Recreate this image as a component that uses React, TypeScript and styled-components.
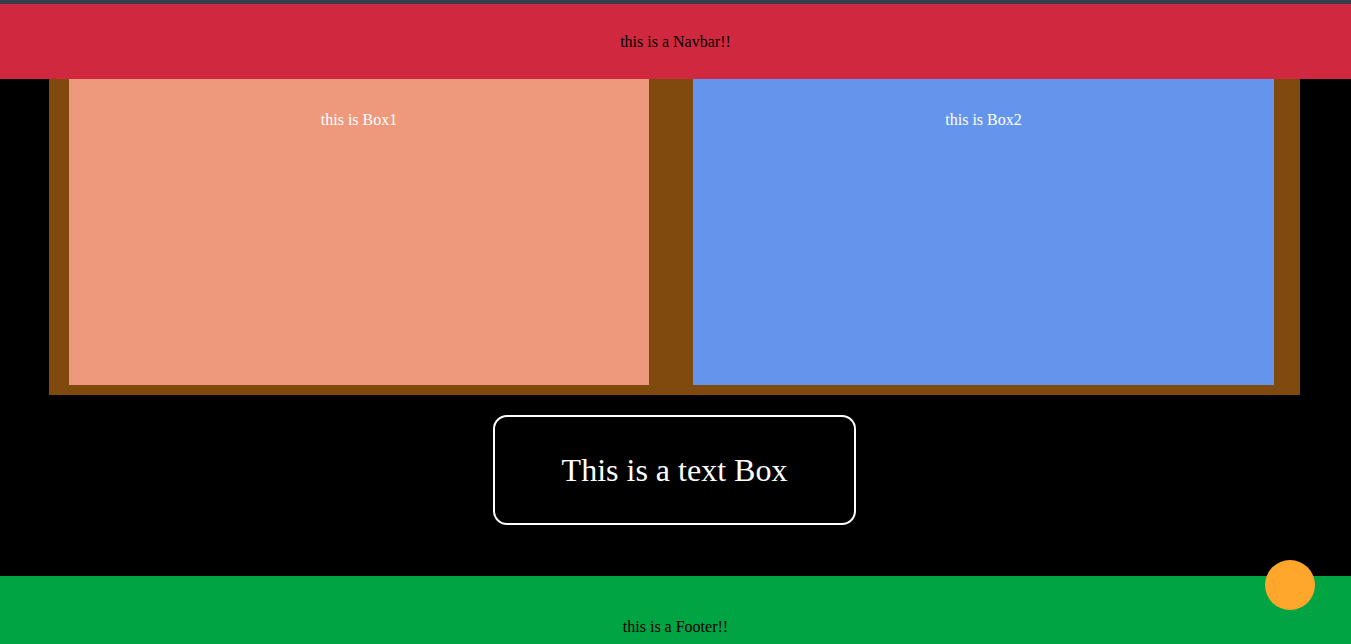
import React from "react";
import styled, { createGlobalStyle } from "styled-components";

const GlobalStyle = createGlobalStyle`
  html, body {
    margin: 0;
    padding: 0;
    background: #000000;
    font-family: "Liberation Serif", "Times New Roman", serif;
    font-size: 16px;
    scrollbar-width: none;
  }
  html::-webkit-scrollbar, body::-webkit-scrollbar { display: none; }
  * { box-sizing: border-box; }
`;

const Page = styled.div`
  display: flex;
  flex-direction: column;
  min-height: 100vh;
  background: #000000;
`;

const TopStrip = styled.div`
  height: 4px;
  background: #353f4d;
`;

const Navbar = styled.header`
  height: 75px;
  background: #d0293f;
  color: #000000;
  display: flex;
  align-items: center;
  justify-content: center;
  padding-top: 1px;
`;

const BoxRow = styled.section`
  margin: 0 51px 0 49px;
  background: #804a0e;
  display: flex;
  gap: 44px;
  padding: 0 26px 10px 20px;
`;

const ColorBox = styled.div<{ $bg: string; $fixed?: boolean }>`
  flex: ${(p) => (p.$fixed ? "0 0 580px" : "1")};
  height: 306px;
  background: ${(p) => p.$bg};
  color: #ffffff;
  text-align: center;
  padding-top: 32px;
`;

const TextBoxWrap = styled.div`
  display: flex;
  justify-content: center;
  padding: 20px 0 51px;
`;

const TextBox = styled.div`
  width: 363px;
  height: 110px;
  border: 2px solid #ffffff;
  border-radius: 14px;
  color: #ffffff;
  font-size: 32px;
  display: flex;
  align-items: center;
  justify-content: center;
  margin-right: 2px;
`;

const Footer = styled.footer`
  height: 100px;
  background: #00a443;
  color: #000000;
  display: flex;
  align-items: center;
  justify-content: center;
  padding-top: 1px;
`;

const FloatingButton = styled.div`
  position: fixed;
  right: 36px;
  bottom: 34px;
  width: 50px;
  height: 50px;
  border-radius: 50%;
  background: #ffa62b;
`;

export default function App() {
  return (
    <>
      <GlobalStyle />
      <Page>
        <TopStrip />
        <Navbar>this is a Navbar!!</Navbar>
        <BoxRow>
          <ColorBox $bg="#ee997c" $fixed>this is Box1</ColorBox>
          <ColorBox $bg="#6495ed">this is Box2</ColorBox>
        </BoxRow>
        <TextBoxWrap>
          <TextBox>This is a text Box</TextBox>
        </TextBoxWrap>
        <Footer>this is a Footer!!</Footer>
      </Page>
      <FloatingButton />
    </>
  );
}
